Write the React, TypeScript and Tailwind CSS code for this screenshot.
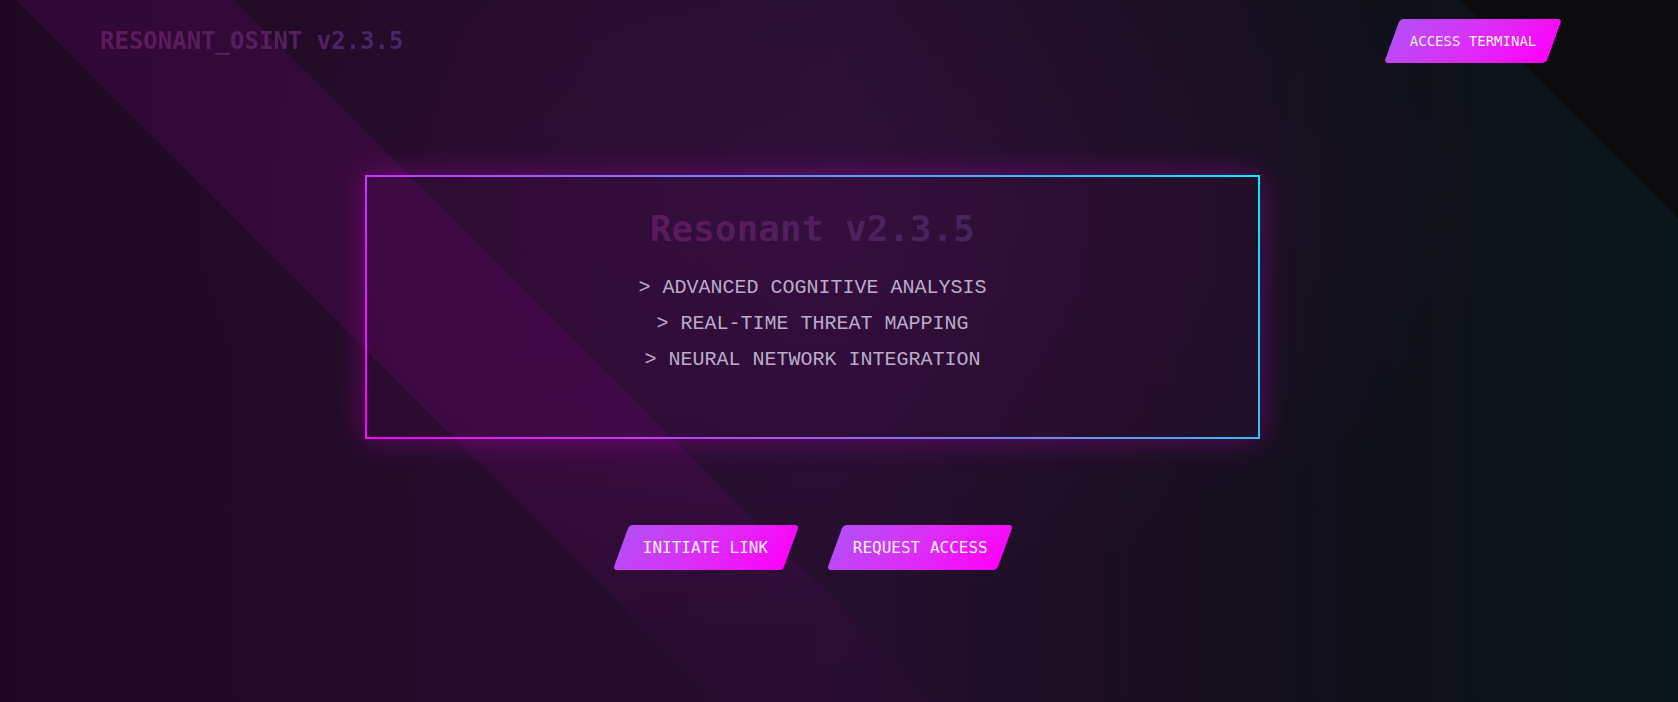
import React from 'react';

const features = [
  'ADVANCED COGNITIVE ANALYSIS',
  'REAL-TIME THREAT MAPPING',
  'NEURAL NETWORK INTEGRATION',
];

const SkewButton = ({ label, size = 'md' }: { label: string; size?: 'sm' | 'md' }) => {
  const box = size === 'sm' ? 'w-[162px] h-[44px] text-[14px]' : 'w-[170px] h-[45px] text-[16px]';
  return (
    <button
      className={`${box} -skew-x-20 rounded-[4px] bg-[linear-gradient(120deg,#b34ff6_0%,#d832f8_45%,#ff00fa_100%)] flex items-center justify-center cursor-pointer`}
    >
      <span className="skew-x-20 text-[#fdf0ff] font-['DejaVu_Sans_Mono',monospace] tracking-normal">
        {label}
      </span>
    </button>
  );
};

export default function App() {
  return (
    <div className="relative h-[702px] w-full overflow-hidden bg-[linear-gradient(45deg,transparent_90.8%,#0b0a0d_90.8%),radial-gradient(ellipse_at_50%_30%,rgba(70,18,80,0.3),transparent_55%),linear-gradient(90deg,#1f0922_0%,#260c2c_35%,#250e2e_50%,#1b0e22_66%,#10111a_82%,#0a181b_100%)]">
      {/* diagonal light band */}
      <div className="pointer-events-none absolute inset-0 bg-[linear-gradient(45deg,transparent_30.2%,rgba(255,0,255,0.08)_30.2%,rgba(255,0,255,0.08)_39.3%,transparent_39.3%)] [mask-image:linear-gradient(to_bottom,black_62%,rgba(0,0,0,0.2)_96%)]" />

      <div className="relative">
        <header className="flex items-center justify-between pl-[100px] pr-[124px] pt-[19px]">
          <h1 className="text-[24px] leading-[32px] font-bold font-['DejaVu_Sans_Mono',monospace] bg-[linear-gradient(90deg,#5e1a5e,#55205f_60%,#45286c)] bg-clip-text text-transparent">
            RESONANT_OSINT v2.3.5
          </h1>
          <SkewButton label="ACCESS TERMINAL" size="sm" />
        </header>

        <main className="pl-[365px] mt-[112px]">
          <section className="w-[895px] h-[264px] border-2 border-solid [border-image:linear-gradient(45deg,#ff00ff,#00f0ff)_1] bg-[rgba(255,0,255,0.03)] shadow-[0_0_28px_rgba(255,0,255,0.3)] pt-[30px] flex flex-col items-center">
            <h2 className="text-[36px] leading-[44px] font-bold font-['DejaVu_Sans_Mono',monospace] bg-[linear-gradient(90deg,#5c1a5e,#46255f)] bg-clip-text text-transparent">
              Resonant v2.3.5
            </h2>
            <ul className="mt-[19px] flex flex-col items-center font-['Liberation_Mono',monospace] text-[20px] leading-[36px] text-[#bcaccb]">
              {features.map((f) => (
                <li key={f}>&gt; {f}</li>
              ))}
            </ul>
          </section>

          <div className="w-[895px] mt-[86px] flex justify-center gap-[44px]">
            <SkewButton label="INITIATE LINK" />
            <SkewButton label="REQUEST ACCESS" />
          </div>
        </main>
      </div>
    </div>
  );
}
